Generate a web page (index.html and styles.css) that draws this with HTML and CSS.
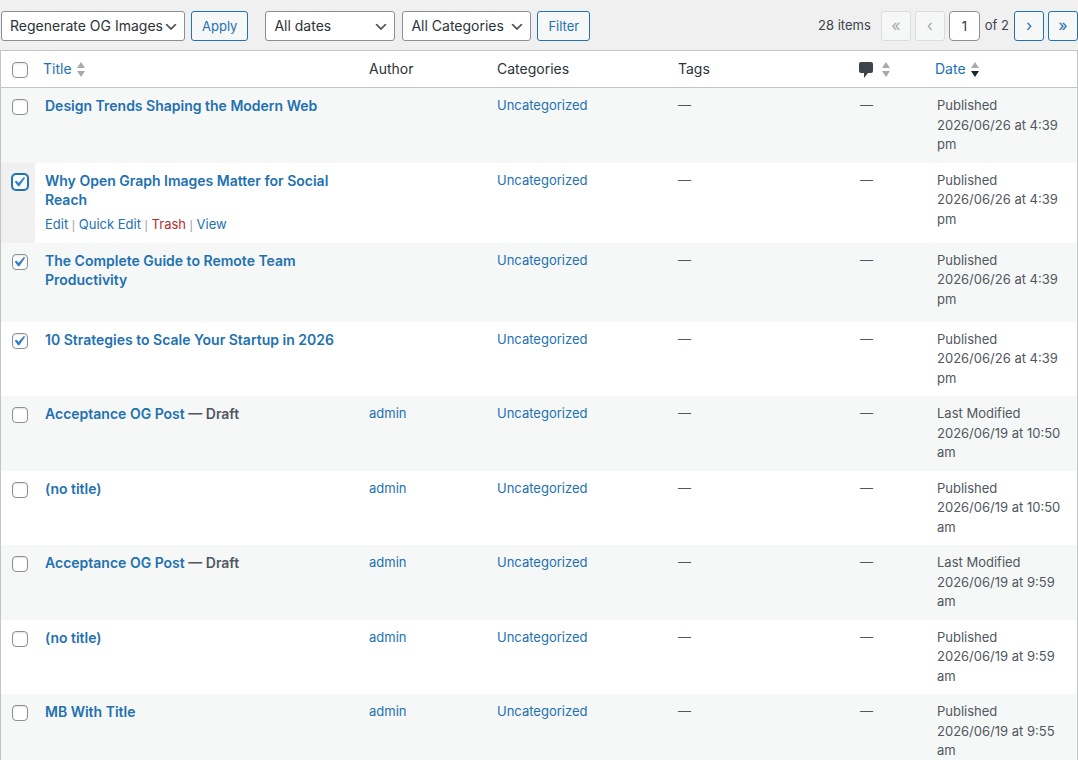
FILE: index.html
```html
<!DOCTYPE html>
<html lang="en">
<head>
    <meta charset="UTF-8">
    <meta name="viewport" content="width=device-width, initial-scale=1.0">
    <title>Posts</title>
    <link rel="stylesheet" href="styles.css">
</head>
<body>
    <form class="posts-filter">
        <div class="tablenav">
            <div class="actions">
                <select class="bulk-select" aria-label="Select bulk action">
                    <option>Regenerate OG Images</option>
                </select>
                <button type="button" class="button">Apply</button>
            </div>
            <div class="actions">
                <select class="date-select" aria-label="Filter by date">
                    <option>All dates</option>
                </select>
                <select class="cat-select" aria-label="Filter by category">
                    <option>All Categories</option>
                </select>
                <button type="button" class="button">Filter</button>
            </div>
            <div class="pagination">
                <span class="item-count">28 items</span>
                <button type="button" class="button page-button" disabled aria-label="First page">«</button>
                <button type="button" class="button page-button" disabled aria-label="Previous page">‹</button>
                <input type="text" class="current-page" value="1" aria-label="Current page">
                <span class="total-pages">of 2</span>
                <button type="button" class="button page-button" aria-label="Next page">›</button>
                <button type="button" class="button page-button" aria-label="Last page">»</button>
            </div>
        </div>

        <table class="posts">
            <colgroup>
                <col class="col-check">
                <col>
                <col class="col-author">
                <col class="col-categories">
                <col class="col-tags">
                <col class="col-comments">
                <col class="col-date">
            </colgroup>
            <thead>
                <tr>
                    <th class="check"><input type="checkbox" aria-label="Select all"></th>
                    <th class="sortable">
                        <a href="#">Title
                            <svg class="sort" viewBox="0 0 8 15"><path class="arrow" d="M4 0L8 6H0z"/><path class="arrow" d="M0 9h8l-4 6z"/></svg>
                        </a>
                    </th>
                    <th>Author</th>
                    <th>Categories</th>
                    <th>Tags</th>
                    <th class="sortable">
                        <a href="#" aria-label="Comments">
                            <svg class="bubble" viewBox="0 0 14 16"><path d="M2 0h10a2 2 0 0 1 2 2v7a2 2 0 0 1-2 2H9l-4 5v-5H2a2 2 0 0 1-2-2V2a2 2 0 0 1 2-2z"/></svg>
                            <svg class="sort" viewBox="0 0 8 15"><path class="arrow" d="M4 0L8 6H0z"/><path class="arrow" d="M0 9h8l-4 6z"/></svg>
                        </a>
                    </th>
                    <th class="sortable">
                        <a href="#">Date
                            <svg class="sort" viewBox="0 0 8 15"><path class="arrow" d="M4 0L8 6H0z"/><path class="arrow active" d="M0 9h8l-4 6z"/></svg>
                        </a>
                    </th>
                </tr>
            </thead>
            <tbody>
                <tr>
                    <td class="check"><input type="checkbox" aria-label="Select Design Trends Shaping the Modern Web"></td>
                    <td><strong><a href="#">Design Trends Shaping the Modern Web</a></strong></td>
                    <td></td>
                    <td><a href="#">Uncategorized</a></td>
                    <td>—</td>
                    <td>—</td>
                    <td>Published<br>2026/06/26 at 4:39 pm</td>
                </tr>
                <tr>
                    <td class="check hovered"><input type="checkbox" class="focused" checked aria-label="Select Why Open Graph Images Matter for Social Reach"></td>
                    <td>
                        <strong><a href="#">Why Open Graph Images Matter for Social Reach</a></strong>
                        <div class="row-actions"><a href="#">Edit</a> | <a href="#">Quick Edit</a> | <a href="#" class="trash">Trash</a> | <a href="#">View</a></div>
                    </td>
                    <td></td>
                    <td><a href="#">Uncategorized</a></td>
                    <td>—</td>
                    <td>—</td>
                    <td>Published<br>2026/06/26 at 4:39 pm</td>
                </tr>
                <tr class="two-line">
                    <td class="check"><input type="checkbox" checked aria-label="Select The Complete Guide to Remote Team Productivity"></td>
                    <td><strong><a href="#">The Complete Guide to Remote Team Productivity</a></strong></td>
                    <td></td>
                    <td><a href="#">Uncategorized</a></td>
                    <td>—</td>
                    <td>—</td>
                    <td>Published<br>2026/06/26 at 4:39 pm</td>
                </tr>
                <tr>
                    <td class="check"><input type="checkbox" checked aria-label="Select 10 Strategies to Scale Your Startup in 2026"></td>
                    <td><strong><a href="#">10 Strategies to Scale Your Startup in 2026</a></strong></td>
                    <td></td>
                    <td><a href="#">Uncategorized</a></td>
                    <td>—</td>
                    <td>—</td>
                    <td>Published<br>2026/06/26 at 4:39 pm</td>
                </tr>
                <tr>
                    <td class="check"><input type="checkbox" aria-label="Select Acceptance OG Post"></td>
                    <td><strong><a href="#">Acceptance OG Post</a> — Draft</strong></td>
                    <td><a href="#">admin</a></td>
                    <td><a href="#">Uncategorized</a></td>
                    <td>—</td>
                    <td>—</td>
                    <td>Last Modified<br>2026/06/19 at 10:50 am</td>
                </tr>
                <tr>
                    <td class="check"><input type="checkbox" aria-label="Select (no title)"></td>
                    <td><strong><a href="#">(no title)</a></strong></td>
                    <td><a href="#">admin</a></td>
                    <td><a href="#">Uncategorized</a></td>
                    <td>—</td>
                    <td>—</td>
                    <td>Published<br>2026/06/19 at 10:50 am</td>
                </tr>
                <tr>
                    <td class="check"><input type="checkbox" aria-label="Select Acceptance OG Post"></td>
                    <td><strong><a href="#">Acceptance OG Post</a> — Draft</strong></td>
                    <td><a href="#">admin</a></td>
                    <td><a href="#">Uncategorized</a></td>
                    <td>—</td>
                    <td>—</td>
                    <td>Last Modified<br>2026/06/19 at 9:59 am</td>
                </tr>
                <tr>
                    <td class="check"><input type="checkbox" aria-label="Select (no title)"></td>
                    <td><strong><a href="#">(no title)</a></strong></td>
                    <td><a href="#">admin</a></td>
                    <td><a href="#">Uncategorized</a></td>
                    <td>—</td>
                    <td>—</td>
                    <td>Published<br>2026/06/19 at 9:59 am</td>
                </tr>
                <tr>
                    <td class="check"><input type="checkbox" aria-label="Select MB With Title"></td>
                    <td><strong><a href="#">MB With Title</a></strong></td>
                    <td><a href="#">admin</a></td>
                    <td><a href="#">Uncategorized</a></td>
                    <td>—</td>
                    <td>—</td>
                    <td>Published<br>2026/06/19 at 9:55 am</td>
                </tr>
            </tbody>
        </table>
    </form>
</body>
</html>
```

FILE: styles.css
```css
* {
    box-sizing: border-box;
}
html {
    overflow: hidden;
}
body {
    margin: 0;
    background: #f0f0f1;
    color: #3c434a;
    font-family: Inter, "Liberation Sans", sans-serif;
    font-size: 13px;
    line-height: 1.5;
}
a {
    color: #2271b1;
    text-decoration: none;
}

/* Toolbar */
.tablenav {
    display: flex;
    align-items: center;
    gap: 17px;
    padding: 11px 0 9px 1px;
}
.actions {
    display: flex;
    gap: 6px;
}
.pagination {
    display: flex;
    align-items: center;
    gap: 4px;
    margin-left: auto;
}
select {
    height: 30px;
    padding: 0 20px 1px 8px;
    border: 1px solid #8c8f94;
    border-radius: 3px;
    background: #fff url('data:image/svg+xml;utf8,<svg xmlns="http://www.w3.org/2000/svg" viewBox="0 0 20 20"><path d="M5 6l5 5 5-5 2 1-7 7-7-7 2-1z" fill="%23555"/></svg>') no-repeat right 5px top 55%;
    background-size: 16px 16px;
    color: #2c3338;
    font-family: inherit;
    font-size: 14px;
    appearance: none;
}
.bulk-select {
    width: 184px;
}
.date-select {
    width: 130px;
    margin-right: 1px;
}
.cat-select {
    width: 129px;
}
.button {
    height: 30px;
    padding: 0 10px;
    border: 1px solid #2271b1;
    border-radius: 3px;
    background: #f6f7f7;
    color: #2271b1;
    font-family: inherit;
    font-size: 13px;
    cursor: pointer;
}
.page-button {
    width: 30px;
    padding: 0 0 3px;
    font-size: 16px;
}
.button:disabled {
    border-color: #dcdcde;
    color: #a7aaad;
    cursor: default;
}
.item-count {
    margin-right: 6px;
}
.current-page {
    width: 31px;
    height: 30px;
    padding: 0;
    border: 1px solid #8c8f94;
    border-radius: 4px;
    background: #fff;
    color: #2c3338;
    font-family: inherit;
    font-size: 13px;
    text-align: center;
}
.total-pages {
    margin: 0 1px;
}

/* Posts table */
.posts {
    width: 100%;
    border: 1px solid #c3c4c7;
    border-spacing: 0;
    table-layout: fixed;
    background: #fff;
}
.col-check {
    width: 34px;
}
.col-author {
    width: 128px;
}
.col-categories {
    width: 181px;
}
.col-tags {
    width: 182px;
}
.col-comments {
    width: 77px;
}
.col-date {
    width: 150px;
}
th {
    height: 37px;
    padding: 0 10px;
    border-bottom: 1px solid #c3c4c7;
    color: #2c3338;
    font-size: 14px;
    font-weight: 400;
    line-height: 20px;
    text-align: left;
}
th.sortable {
    padding: 0 8px;
}
th.sortable a {
    display: flex;
    align-items: center;
    gap: 5px;
}
td {
    padding: 8px 10px;
    color: #50575e;
    vertical-align: top;
}
td strong {
    display: block;
    font-size: 14px;
    font-weight: 600;
    line-height: 1.4;
}
tbody tr:nth-child(odd) {
    background: #f6f7f7;
}
.two-line td {
    height: 79px;
}
.check {
    padding: 11px 0 0 11px;
    line-height: 0;
    vertical-align: top;
}
.hovered {
    background: #f0f0f1;
}
.row-actions {
    padding-top: 4px;
    color: #a7aaad;
    font-family: "Liberation Sans", sans-serif;
    line-height: 20px;
}
.row-actions a {
    font-family: Inter, "Liberation Sans", sans-serif;
}
.row-actions .trash {
    color: #b32d2e;
}
.sort {
    width: 8px;
    height: 15px;
}
.arrow {
    fill: #a7aaad;
}
.arrow.active {
    fill: #1d2327;
}
.bubble {
    width: 14px;
    height: 16px;
    margin: 1px 4px 0 1px;
    fill: #3c434a;
}

input[type="checkbox"] {
    width: 16px;
    height: 16px;
    margin: 0;
    border: 1px solid #8c8f94;
    border-radius: 4px;
    background: #fff;
    box-shadow: inset 0 1px 2px rgba(0, 0, 0, 0.1);
    appearance: none;
}
input[type="checkbox"]:checked {
    background: #fff url('data:image/svg+xml;utf8,<svg xmlns="http://www.w3.org/2000/svg" viewBox="0 0 20 20"><path d="M14.83 4.89l1.34.94-5.81 8.38H9.02L5.78 9.67l1.34-1.25 2.57 2.4z" fill="%233582c4"/></svg>') no-repeat -4px -3px;
    background-size: 20px 20px;
}
input[type="checkbox"].focused {
    border-color: #2271b1;
    box-shadow: 0 0 0 1px #2271b1;
}
```
